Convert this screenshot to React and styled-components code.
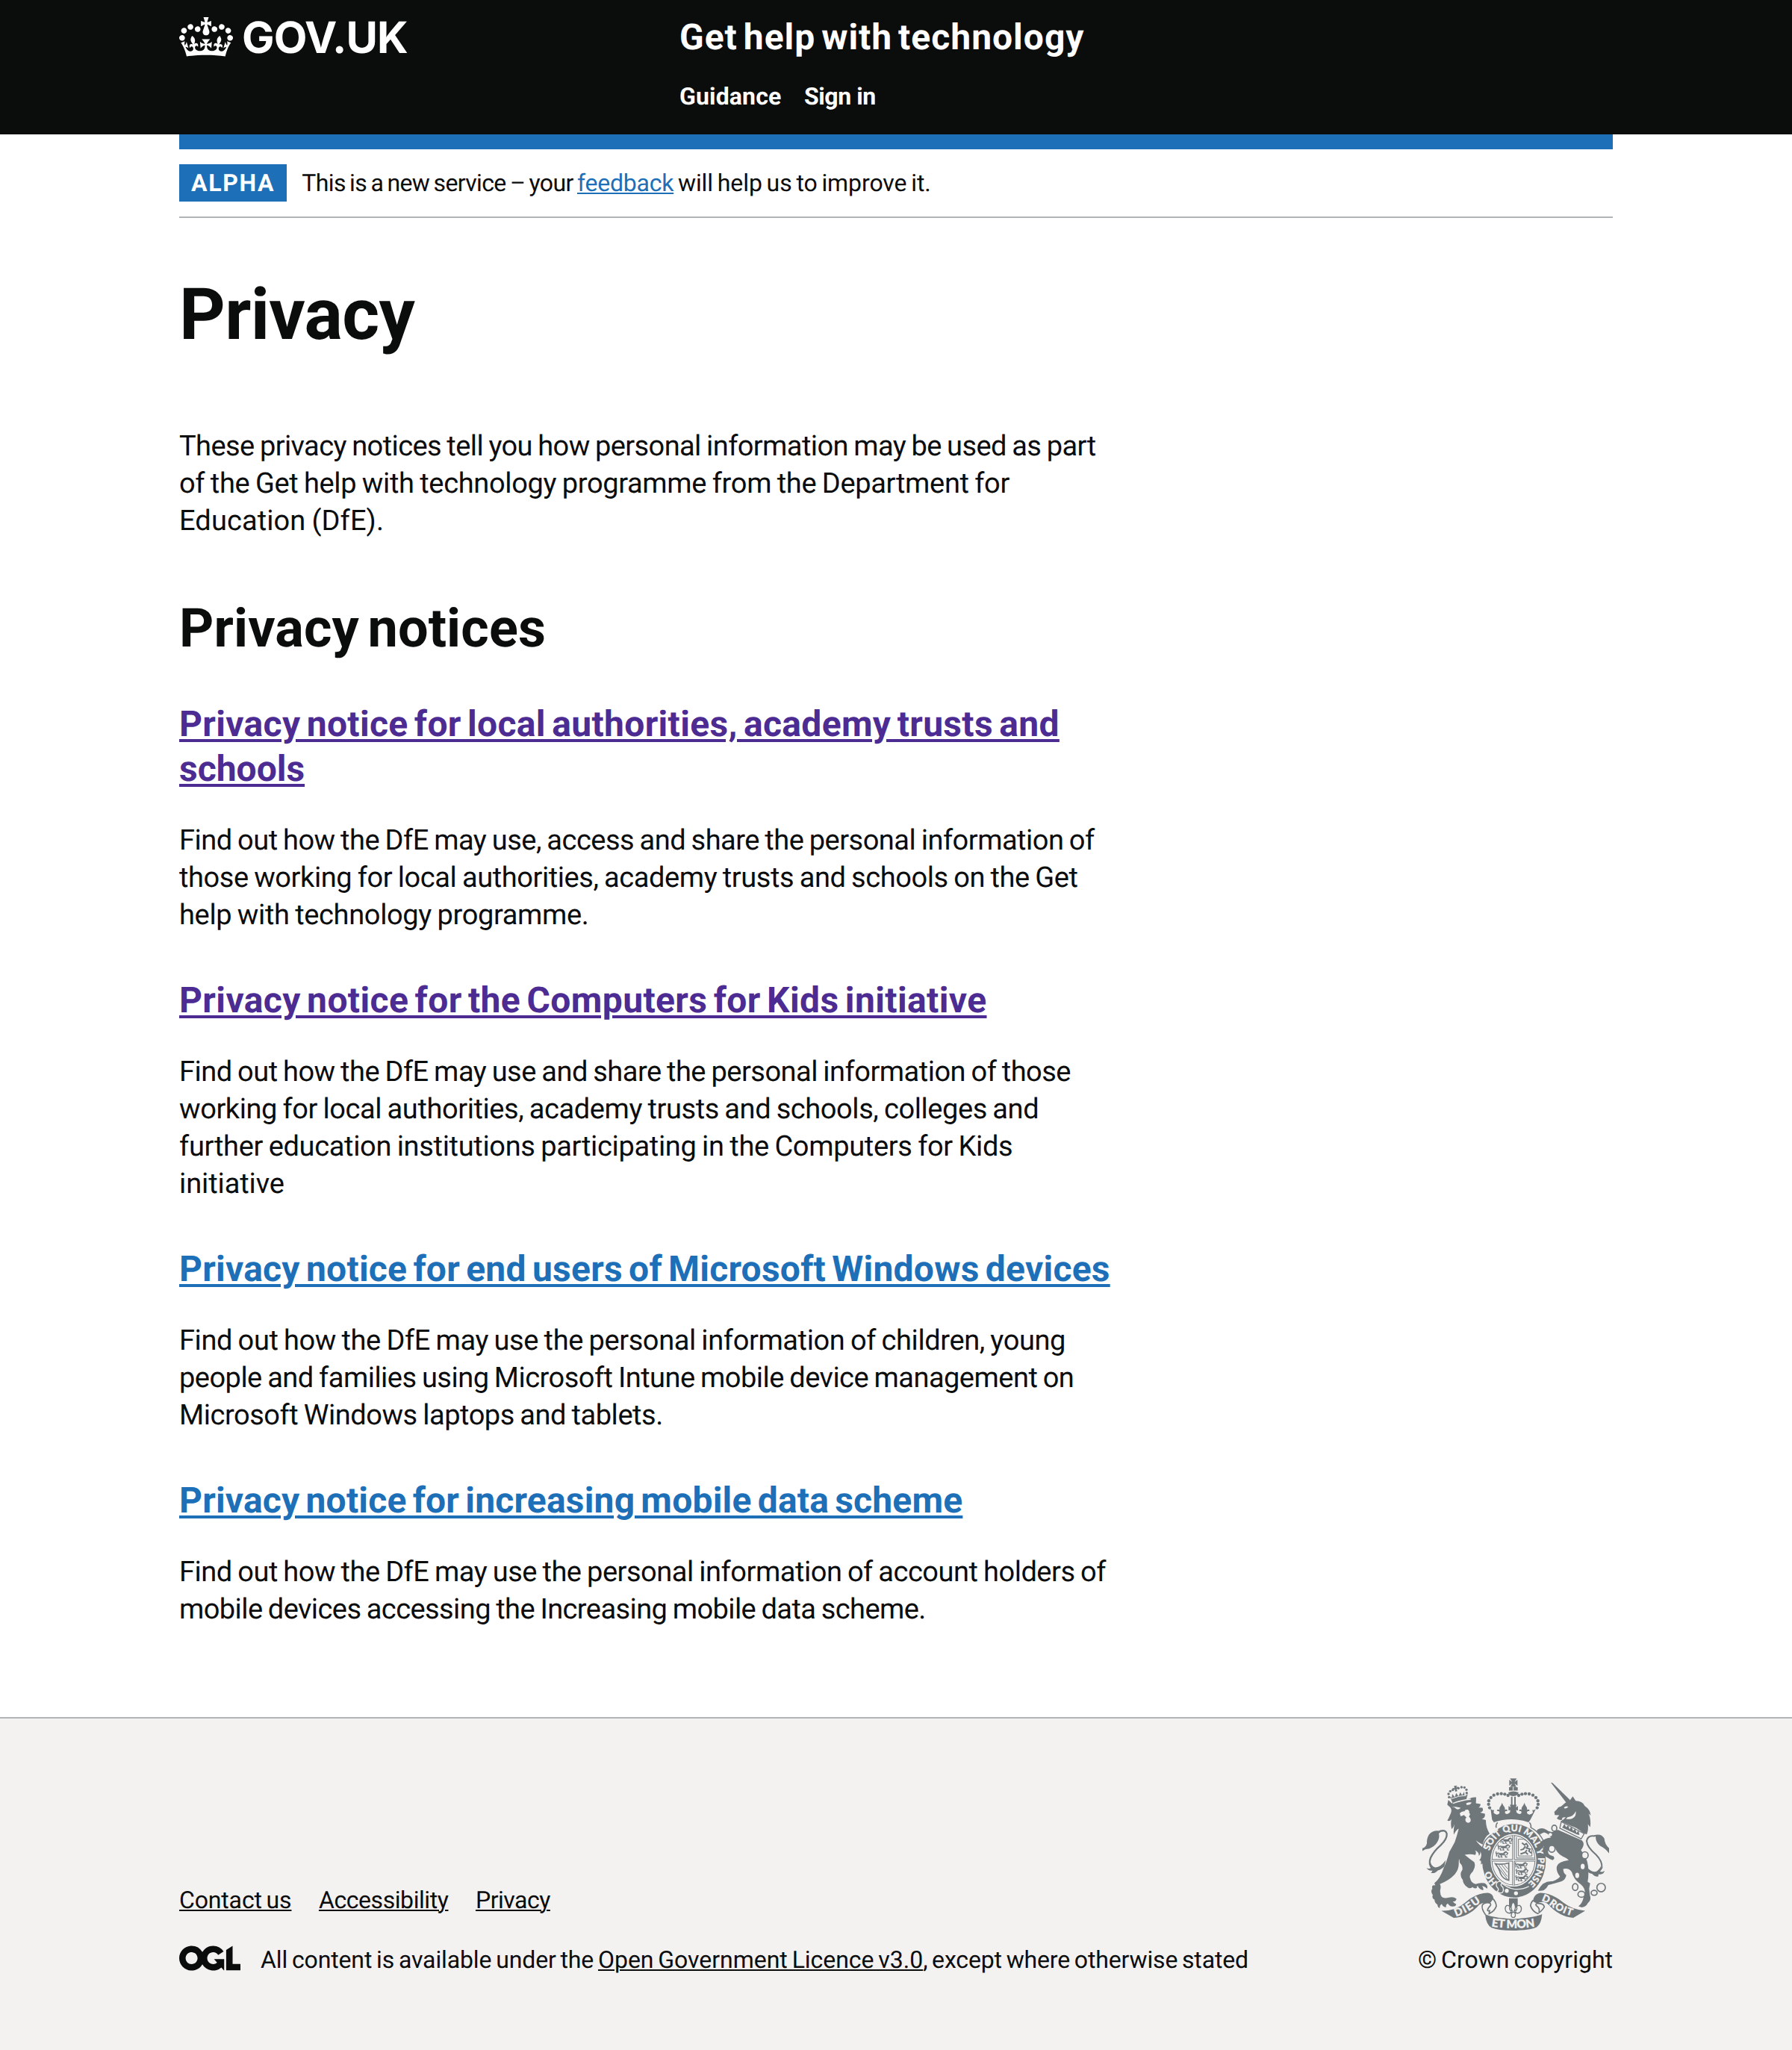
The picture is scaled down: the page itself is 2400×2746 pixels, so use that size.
import React from "react";
import styled, { createGlobalStyle, css } from "styled-components";

const ink = "#0b0c0c";
const blue = "#1d70b8";
const visited = "#4c2c92";
const rule = "#b1b4b6";
const paper = "#f3f2f1";
const crest = "#6f777b";

const GlobalStyle = createGlobalStyle`
  *, *::before, *::after { box-sizing: border-box; }
  html, body { margin: 0; padding: 0; }
  body {
    background: #fff;
    color: ${ink};
    font-family: Roboto, "Liberation Sans", sans-serif;
    text-rendering: geometricPrecision;
  }
  h1, h2, h3, p, ul { margin: 0; padding: 0; }
`;

const Container = styled.div`
  width: 1920px;
  margin: 0 auto;
`;

const linkBase = css`
  color: inherit;
  text-decoration: underline;
  text-decoration-skip-ink: auto;
`;

const TextLink = styled.a`
  ${linkBase}
  color: ${(p) => p.$color || "inherit"};
  text-decoration-thickness: 2px;
  text-underline-offset: 2px;
  letter-spacing: ${(p) => p.$track || 0}px;
  white-space: nowrap;
`;

const Run = styled.span`
  white-space: pre;
  letter-spacing: ${(p) => p.$track || 0}px;
`;

const Line = styled.span`
  display: block;
  white-space: nowrap;
  letter-spacing: ${(p) => p.$track || 0}px;
`;

/* Header */

const Header = styled.header`
  height: 180px;
  background: ${ink};
  color: #fff;
`;

const HeaderInner = styled(Container)`
  display: flex;
  padding-top: 20px;
`;

const Brand = styled.a`
  display: flex;
  width: 670px;
  gap: 12px;
  color: #fff;
  text-decoration: none;
`;

const CrownIcon = styled.svg`
  width: 72px;
  height: 53px;
  margin-top: 3px;
  fill: currentColor;
`;

const Logotype = styled.span`
  font: 700 58px/60px Inter, "Liberation Sans", sans-serif;
  letter-spacing: -0.9px;
`;

const HeaderContent = styled.div`
  display: flex;
  flex-direction: column;
  gap: 29px;
`;

const ServiceName = styled.a`
  font-size: 48px;
  line-height: 60px;
  font-weight: 700;
  letter-spacing: 0.99px;
  word-spacing: -5px;
  color: #fff;
`;

const Nav = styled.nav`
  display: flex;
  gap: 30.5px;
`;

const NavLink = styled.a`
  font-size: 32px;
  line-height: 40px;
  font-weight: 700;
  letter-spacing: ${(p) => p.$track}px;
  color: #fff;
`;

const BlueBar = styled.div`
  height: 20px;
  background: ${blue};
`;

/* Phase banner */

const PhaseBanner = styled.div`
  display: flex;
  align-items: center;
  gap: 20px;
  height: 92px;
  border-bottom: 2px solid ${rule};
`;

const Tag = styled.strong`
  height: 50px;
  padding: 0 16px;
  background: ${blue};
  color: #fff;
  font-size: 32px;
  line-height: 50px;
  letter-spacing: 1.7px;
`;

const SmallText = styled.span`
  font-size: 32px;
  line-height: 40px;
  word-spacing: -2px;
  white-space: nowrap;
`;

/* Main content */

const Main = styled.main`
  padding: 80px 0 60px;
`;

const PageTitle = styled.h1`
  font-size: 96px;
  line-height: 100px;
  letter-spacing: -0.7px;
  margin-bottom: 101px;
`;

const SectionTitle = styled.h2`
  font-size: 72px;
  line-height: 80px;
  letter-spacing: 0.12px;
  word-spacing: -6.5px;
  margin: 79px 0 58px;
`;

const NoticeTitle = styled.h3`
  font-size: 48px;
  line-height: 60px;
  word-spacing: -4px;
  margin-bottom: 41px;
`;

const NoticeLink = styled.a`
  ${linkBase}
  color: ${(p) => (p.$visited ? visited : blue)};
  text-decoration: none;

  ${Line} {
    width: max-content;
    text-decoration: underline;
    text-decoration-thickness: 4px;
    text-underline-offset: 4px;
  }
`;

const Body = styled.p`
  font-size: 38px;
  line-height: 50px;
  word-spacing: -1.5px;
`;

const Notice = styled.section`
  margin-bottom: 59px;
`;

/* Footer */

const Footer = styled.footer`
  height: 446px;
  background: ${paper};
  border-top: 2px solid ${rule};
`;

const FooterInner = styled(Container)`
  display: flex;
  justify-content: space-between;
  align-items: flex-end;
  padding-top: 80px;
`;

const FooterMeta = styled.div`
  display: flex;
  flex-direction: column;
  gap: 40px;
`;

const FooterLinks = styled.nav`
  display: flex;
  gap: 36.5px;
  font-size: 32px;
  line-height: 40px;
  word-spacing: -2px;
`;

const Licence = styled.div`
  display: flex;
  align-items: center;
  gap: 27px;
`;

const LicenceMark = styled.svg`
  width: 82px;
  height: 34px;
  margin-top: -4px;
`;

const Copyright = styled.div`
  display: flex;
  flex-direction: column;
  align-items: center;
  gap: 19px;
`;

const Arms = styled.svg`
  width: 250px;
  height: 204px;
`;

const notices = [
  {
    visited: true,
    title: [
      ["Privacy notice for local authorities, academy trusts and", 0.34],
      ["schools", 0],
    ],
    body: [
      ["Find out how the DfE may use, access and share the personal information of", -0.505],
      ["those working for local authorities, academy trusts and schools on the Get", -0.417],
      ["help with technology programme.", -0.35],
    ],
  },
  {
    visited: true,
    title: [["Privacy notice for the Computers for Kids initiative", 0.39]],
    body: [
      ["Find out how the DfE may use and share the personal information of those", -0.508],
      ["working for local authorities, academy trusts and schools, colleges and", -0.42],
      ["further education institutions participating in the Computers for Kids", -0.329],
      ["initiative", -0.1],
    ],
  },
  {
    title: [["Privacy notice for end users of Microsoft Windows devices", 0.245]],
    body: [
      ["Find out how the DfE may use the personal information of children, young", -0.394],
      ["people and families using Microsoft Intune mobile device management on", -0.525],
      ["Microsoft Windows laptops and tablets.", -0.46],
    ],
  },
  {
    title: [["Privacy notice for increasing mobile data scheme", 0.195]],
    body: [
      ["Find out how the DfE may use the personal information of account holders of", -0.468],
      ["mobile devices accessing the Increasing mobile data scheme.", -0.58],
    ],
  },
];

const intro = [
  ["These privacy notices tell you how personal information may be used as part", -0.593],
  ["of the Get help with technology programme from the Department for", -0.337],
  ["Education (DfE).", 0.1],
];

const Lines = ({ lines }) =>
  lines.map(([text, track]) => (
    <Line key={text} $track={track}>
      {text}
    </Line>
  ));

const Crown = () => (
  <CrownIcon viewBox="0 0 132 97" aria-hidden="true">
    <path d="M25 30.2c3.5 1.5 7.7-.2 9.1-3.7 1.5-3.6-.2-7.8-3.9-9.2-3.6-1.4-7.6.3-9.1 3.9-1.4 3.5.3 7.5 3.9 9zM9 39.5c3.6 1.5 7.8-.2 9.2-3.7 1.5-3.6-.2-7.8-3.9-9.1-3.6-1.5-7.6.2-9.1 3.8-1.4 3.5.3 7.5 3.8 9zM4.4 57.2c3.5 1.5 7.7-.2 9.1-3.8 1.5-3.6-.2-7.7-3.9-9.1-3.5-1.5-7.6.3-9.1 3.8-1.4 3.5.3 7.6 3.9 9.1zm38.3-21.4c3.5 1.5 7.7-.2 9.1-3.8 1.5-3.6-.2-7.7-3.9-9.1-3.6-1.5-7.6.3-9.1 3.8-1.3 3.6.4 7.7 3.9 9.1zm64.4-5.6c-3.6 1.5-7.8-.2-9.1-3.7-1.5-3.6.2-7.8 3.8-9.2 3.6-1.4 7.7.3 9.2 3.9 1.3 3.5-.4 7.5-3.9 9zm15.9 9.3c-3.6 1.5-7.7-.2-9.1-3.7-1.5-3.6.2-7.8 3.7-9.1 3.6-1.5 7.7.2 9.2 3.8 1.5 3.5-.3 7.5-3.8 9zm4.7 17.7c-3.6 1.5-7.8-.2-9.2-3.8-1.5-3.6.2-7.7 3.9-9.1 3.6-1.5 7.7.3 9.2 3.8 1.3 3.5-.4 7.6-3.9 9.1zM89.3 35.8c-3.6 1.5-7.8-.2-9.2-3.8-1.4-3.6.2-7.7 3.9-9.1 3.6-1.5 7.7.3 9.2 3.8 1.4 3.6-.3 7.7-3.9 9.1zM69.7 17.7l8.9 4.7V9.3l-8.9 2.8c-.2-.3-.5-.6-.9-.9L72.4 0H59.6l3.5 11.2c-.3.3-.6.5-.9.9l-8.8-2.8v13.1l8.8-4.7c.3.3.6.7.9.9l-5 15.4v.1c-.2.8-.4 1.6-.4 2.4 0 4.1 3.1 7.5 7 8.1h.2c.3 0 .7.1 1 .1.4 0 .7 0 1-.1h.2c4-.6 7.1-4.1 7.1-8.1 0-.8-.1-1.7-.4-2.4V34l-5.1-15.4c.4-.2.7-.6 1-.9zM66 92.8c16.9 0 32.8 1.1 47.1 3.2 4-16.9 8.9-26.7 14-33.5l-9.6-3.4c1 4.9 1.1 7.2 0 10.2-1.5-1.4-3-4.3-4.2-8.7L108.6 76c2.8-2 5-3.2 7.5-3.3-4.4 9.4-10 11.9-13.6 11.2-4.3-.8-6.3-4.6-5.6-7.9 1-4.7 5.7-5.9 8-.5 4.3-8.7-3-11.4-7.6-8.8 7.1-7.2 7.9-13.5 2.1-21.1-8 6.1-8.1 12.3-4.5 20.8-4.7-5.4-12.1-2.5-9.5 6.2 3.4-5.2 7.9-2 7.2 3.1-.6 4.3-6.4 7.8-13.5 7.2-10.3-.9-10.9-8-11.2-13.8 2.5-.5 7.1 1.8 11 7.3L80.2 60c-4.1 4.4-8 5.3-12.3 5.4 1.4-4.4 8-11.6 8-11.6H55.5s6.4 7.2 7.9 11.6c-4.2-.1-8-1-12.3-5.4l1.4 16.4c3.9-5.5 8.5-7.7 10.9-7.3-.3 5.8-.9 12.8-11.1 13.8-7.2.6-12.9-2.9-13.5-7.2-.7-5 3.8-8.3 7.1-3.1 2.7-8.7-4.6-11.6-9.4-6.2 3.7-8.5 3.6-14.7-4.6-20.8-5.8 7.6-5 13.9 2.2 21.1-4.7-2.6-11.9.1-7.7 8.8 2.3-5.5 7.1-4.2 8.1.5.7 3.3-1.3 7.1-5.7 7.9-3.5.7-9-1.8-13.5-11.2 2.5.1 4.7 1.3 7.5 3.3l-4.7-15.4c-1.2 4.4-2.7 7.2-4.3 8.7-1.1-3-.9-5.3 0-10.2l-9.5 3.4c5 6.9 9.9 16.7 14 33.5 14.8-2.1 30.8-3.2 47.7-3.2z" />
  </CrownIcon>
);

const OpenLicenceMark = () => (
  <LicenceMark viewBox="0 0 483.2 195.7" fill={ink} aria-hidden="true">
    <path d="M421.5 142.8V.1l-50.7 32.3v161.1h112.4v-50.7zm-122.3-9.6A47.12 47.12 0 0 1 221 97.8c0-26 21.1-47.1 47.1-47.1 16.7 0 31.4 8.7 39.7 21.8l42.7-27.2A97.63 97.63 0 0 0 268.1 0c-36.5 0-68.3 20.1-85.1 49.7A98 98 0 0 0 97.8 0C43.9 0 0 43.9 0 97.8s43.9 97.8 97.8 97.8c36.5 0 68.3-20.1 85.1-49.7a97.76 97.76 0 0 0 149.6 25.4l19.4 22.2h3v-87.8h-80l24.3 27.5zM97.8 145c-26 0-47.1-21.1-47.1-47.1s21.1-47.1 47.1-47.1 47.1 21.1 47.1 47.1S123.8 145 97.8 145" />
  </LicenceMark>
);

const crownPearls = [
  [342, 184], [338, 170], [339, 156], [347, 143], [359, 133], [374, 128], [389, 127], [403, 129], [416, 134],
];
const smallPearls = [
  [179, 141], [177, 128], [184, 117], [194, 112], [217, 105], [229, 101], [241, 102], [249, 111], [250, 124],
];

const WalkingLion = ({ x, y }) => (
  <g transform={`translate(${x} ${y})`} strokeWidth="4" fill="none">
    <path d="M2 18V8q6-6 12-2h18l8-6 7 4-5 9M8 10l2 10h6M22 8l-2 12h6M36 9l2 11h7" />
    <path d="M12 10h22" strokeWidth="6" />
    <path d="M4 8q-8-4-2-10M30 6q4-8 12-8" />
  </g>
);

const RoyalArms = () => (
  <Arms viewBox="72 65 750 613" preserveAspectRatio="none" fill={crest} stroke="none" aria-hidden="true">
    <defs>
      <path id="motto" d="M376 486A100 116 0 1 1 490 492" />
      <path id="dieu" d="M207 622Q255 606 292 574Q306 564 322 562" />
      <path id="droit" d="M549 559Q566 562 583 575Q622 606 684 622" />
      <path id="etmon" d="M349 661Q437 676 528 661" />
      <clipPath id="shieldClip">
        <ellipse cx="438" cy="395" rx="88" ry="101" />
      </clipPath>
    </defs>

    {/* Lion's crown */}
    <g>
      {smallPearls.map(([x, y]) => (
        <circle key={`${x}-${y}`} cx={x} cy={y} r="5" />
      ))}
      <path d="M199 96l12-2-3 8 8-3 2 9-8-1 2 10-8 2-2-10-7 4-2-9 8 1z" />
      <path d="M181 137l9 7 2-16 10 13 6-17 9 14 7-17 8 12 8-14 1 15 13-5-6 24q-30 1-53 14z" />
      <path d="M187 148q30-13 62-14" fill="none" stroke={paper} strokeWidth="3" />
    </g>

    {/* Lion */}
    <path d="M112 430Q95 410 105 385Q118 358 145 335Q172 310 170 288Q165 270 140 279" fill="none" stroke={crest} strokeWidth="7" />
    <path d="M148 279Q118 270 99 291Q89 307 90 327Q86 343 72 347V358Q84 348 98 349Q118 342 130 325Q143 305 138 287z" />
    <path d="M88 425Q97 432 108 425Q101 410 104 401Q108 420 124 424Q145 424 166 394L160 420Q143 435 134 436Q122 450 106 446Q113 440 112 436Q97 440 88 425z" />
    <path d="M176 152L172 172L184 182Q194 194 182 215Q177 228 172 235Q181 240 189 230Q184 250 190 270Q197 264 201 250Q196 275 198 292Q208 272 218 268Q210 300 202 322Q190 345 180 362Q170 400 158 425Q142 472 120 487L124 496Q107 492 112 510Q103 520 114 535Q108 548 121 554Q120 566 133 574Q132 584 142 588Q141 574 150 571Q155 584 168 584Q164 574 174 569Q184 585 198 580Q205 582 208 572Q199 568 194 561Q207 562 209 550Q197 540 178 545Q160 550 150 543Q140 528 145 508Q147 497 142 491Q180 476 202 452Q220 430 218 405Q219 375 222 405Q234 415 233 432Q218 453 234 474Q236 493 251 502Q263 513 273 503Q282 512 292 506Q287 500 295 499Q300 512 316 516Q319 506 311 499Q324 500 332 510Q337 496 322 487Q300 484 286 491Q268 488 264 468Q258 456 275 440Q288 418 280 402Q262 390 242 373Q266 368 284 374Q291 364 283 355Q300 362 299 378Q307 370 304 358Q315 380 300 396Q312 394 306 412Q315 406 320 410L320 422Q334 412 330 424L342 412Q349 400 345 388Q343 362 322 348Q300 335 287 315Q301 326 314 332Q322 300 342 288Q326 262 327 233L311 229Q326 224 323 208L304 203Q320 198 313 184L298 183Q307 176 305 169L287 166L288 142Q270 140 262 147Q225 160 190 166z" />
    <path d="M190 180q12 0 18 8 10 6 18-4l-20-4zM248 166q11-6 22-3-7 12-21 9zM222 206q8-10 20-8 0-8 12-7 8 3 6 14l4 4-5 11q10 9 6 19-8 10-18 1-6-10 2-17l-10-10-13 5z" fill={paper} />
    <path d="M195 166Q230 152 266 150" fill="none" stroke={paper} strokeWidth="4" />

    {/* Central crown */}
    <path d="M424 66h27l-9 14 12-9v24l-12-9 8 14h-26l9-14-12 9V71l12 9z" />
    <path d="M420 101h35v14h-35z" />
    <path d="M437 99v18M420 117h36" stroke={paper} strokeWidth="3" />
    <path d="M417 122q20-9 41 0-1 14-21 15-19-1-20-15z" />
    <path d="M428 139h6v36h-6zM441 139h6v36h-6z" />
    {crownPearls.map(([x, y]) => (
      <React.Fragment key={`${x}-${y}`}>
        <circle cx={x} cy={y} r="6.5" />
        <circle cx={875 - x} cy={y} r="6.5" />
      </React.Fragment>
    ))}
    <path d="M346 188q8 8 14 4l-2 12q12 12 22 4 4-6-1-11-5 2-8-3 5-7 11-1-2-8 2-13 5-6 8-16 4 10 9 16 4 6 2 13 6-6 11 1-3 5-8 3-5 6 1 11 8 4 17-6l1-9-7 2v-18l9 5-4-10h28l-4 10 9-5v18l-7-2 1 9q9 10 17 6 6-5 1-11-5 2-8-3 5-7 11-1-2-7 2-13 5-6 9-16 3 10 8 16 4 5 2 13 6-6 11 1-3 5-8 3-5 5-1 11 10 8 22-4l-2-12q6 4 14-4l-22 44q-4 6-7 10-70-24-140 0-3-4-7-10z" />
    <path d="M374 243q-9 10-5 21M502 243q9 10 5 21" fill="none" stroke={crest} strokeWidth="5" />

    {/* Garter and shield */}
    <ellipse cx="440" cy="397" rx="128" ry="148" />
    <path d="M313 350Q317 307 365 284M507 263Q560 290 575 370" fill="none" stroke={crest} strokeWidth="4" />
    <ellipse cx="438" cy="395" rx="92" ry="106" fill={paper} />
    <g clipPath="url(#shieldClip)" stroke={crest}>
      <ellipse cx="438" cy="395" rx="87" ry="100" fill="none" strokeWidth="4" />
      <path d="M438 290v210M345 395h190" strokeWidth="10" />
      <path d="M438 290v210M345 395h190" stroke={paper} strokeWidth="4" />
      <WalkingLion x={386} y={307} />
      <WalkingLion x={376} y={334} />
      <WalkingLion x={368} y={362} />
      <WalkingLion x={446} y={406} />
      <WalkingLion x={449} y={432} />
      <WalkingLion x={448} y={458} />
      <path d="M450 302v84h70M458 310v68h54V340q-10-20-34-30z" fill="none" strokeWidth="3" />
      <path d="M472 325l10 8 8-5 6 10-6 8 14 4-4 8 10 8M486 338l-8 12-12 4M492 354l-8 10-18 6M488 364l8 8" fill="none" strokeWidth="6" />
      <path d="M365 409q28 5 54-3v70q-24-5-33-27-4-18-21-40z" fill="none" strokeWidth="5" />
      <path d="M379 414l34 46M390 413l24 31M401 413l14 17M377 424l37 48" fill="none" strokeWidth="3" />
    </g>
    <path d="M380 478Q410 506 440 511Q475 514 500 500" fill="none" stroke={paper} strokeWidth="4" />
    <path d="M372 484q14-10 20 4-10 6 2 14 8 14-2 24-14 4-20-6 8-4 4-12-12-10-4-24z" stroke={paper} strokeWidth="4" />
    <circle cx="411" cy="518" r="8" fill={paper} />
    <circle cx="448" cy="528" r="8" fill={paper} />
    <g fill={paper} stroke={paper} strokeWidth="1" fontFamily="Lato, sans-serif" fontWeight="900" fontSize="36">
      <text letterSpacing="-1">
        <textPath href="#motto" startOffset="4">HO</textPath>
      </text>
      <text>
        <textPath href="#motto" startOffset="140" textLength="408">SOIT QUI MAL Y PENSE</textPath>
      </text>
    </g>

    {/* Unicorn */}
    <path d="M588 82l7 2 70 68-12 15z" />
    <path d="M630 178Q645 162 666 152L676 138L688 156Q715 156 724 176Q748 192 748 215L740 207Q751 235 746 262L737 250Q740 275 732 291L716 284Q690 262 672 258L640 244L628 238Q640 232 648 222Q630 220 634 232Q620 236 612 226L622 214L604 213L602 200Q612 192 618 182z" />
    <path d="M641 182q9-8 17-2-5 8-16 6zM655 222q26-4 33-25 4 22-14 30-12 4-25 2z" fill={paper} />
    <path d="M630 240L722 288L710 309L624 266z" fill={paper} stroke={crest} strokeWidth="4" />
    <path d="M635 262l8-14 6 14 9-8 5 17 8-12 6 18 9-9 5 17 8-10 4 18-10-2-60-28z" />
    <path d="M616 272L713 315Q728 330 709 354Q735 385 738 420Q741 455 736 482L746 488L742 510L745 536Q752 556 736 568Q732 580 712 585L699 580Q714 568 718 550L725 520Q722 500 700 486Q680 470 672 442Q660 425 638 430Q637 445 650 455Q648 472 632 480Q606 488 578 495Q572 508 560 516Q548 520 536 517Q545 500 556 490Q575 478 595 480Q620 470 625 460Q608 440 612 420Q618 400 660 395Q650 385 636 380Q610 365 605 342L582 348Q570 362 584 374L600 380L602 388L596 395Q572 385 562 375Q552 355 560 340Q545 335 546 322Q566 305 588 304Q576 285 560 283L545 290Q528 288 533 272Q552 260 570 272Q590 290 616 272z" />
    <path d="M745 440Q778 455 793 425Q796 400 770 373Q734 343 732 318Q736 293 765 298" fill="none" stroke={crest} strokeWidth="6" />
    <path d="M760 295Q790 284 803 308Q804 330 822 347V367Q808 348 786 337Q768 322 768 300z" />
    <path d="M734 425Q760 450 774 438Q790 425 790 412Q792 426 784 438Q794 446 804 437Q800 455 780 451L778 461Q763 462 754 450Q740 448 734 436z" />
    <g fill={paper} stroke={crest} strokeWidth="5">
      <ellipse cx="602" cy="266" rx="10" ry="12" />
      <ellipse cx="592" cy="349" rx="13" ry="14" />
      <ellipse cx="725" cy="375" rx="13" ry="14" />
      <ellipse cx="686" cy="503" rx="11" ry="14" />
      <ellipse cx="711" cy="532" rx="14" ry="12" />
      <ellipse cx="762" cy="526" rx="12" ry="10" />
      <circle cx="790" cy="505" r="17" />
    </g>
    <circle cx="586" cy="292" r="7" fill={paper} />
    <ellipse cx="716" cy="420" rx="8" ry="11" fill={paper} />
    <ellipse cx="694" cy="456" rx="8" ry="11" fill={paper} />

    {/* Ribbon */}
    <path d="M148 598Q205 600 243 566Q290 525 335 526Q358 530 357 550L343 569Q318 561 300 574Q260 622 198 627z" />
    <path d="M726 598Q675 594 639 566Q590 525 545 526Q519 532 516 560L532 569Q560 555 579 574Q620 620 678 627z" />
    <g fill="none" stroke={crest} strokeWidth="5">
      <path d="M350 545Q368 560 369 580Q362 600 340 610L342 598Q325 602 343 580Q350 573 343 567Q322 562 313 575Q308 590 326 615" />
      <path d="M517 556Q505 570 507 580Q514 600 535 610Q550 602 562 583Q560 568 532 569Q522 573 535 582Q545 592 540 603" />
    </g>
    <path d="M324 612Q345 625 437 632Q528 625 553 612Q550 650 532 664Q510 677 437 678Q375 678 350 667Q328 655 324 612z" />
    <path d="M420 548h35v38h-35z" />
    <g fill={paper} stroke={crest} strokeWidth="4">
      <path d="M437 562Q422 580 433 599Q424 600 422 590Q426 575 411 577Q400 585 408 601Q416 612 432 606Q424 624 437 626Q450 624 443 606Q460 612 467 601Q474 585 463 577Q448 575 452 590Q450 600 441 599Q452 580 437 562z" />
      <path d="M424 604h26" strokeWidth="5" />
    </g>
    <g fill={paper} stroke={paper} strokeWidth="1" fontFamily="Lato, sans-serif" fontWeight="900">
      <text fontSize="43"><textPath href="#dieu" textLength="116">DIEU</textPath></text>
      <text fontSize="40"><textPath href="#droit" textLength="137">DROIT</textPath></text>
      <text fontSize="46"><textPath href="#etmon" textLength="176">ET MON</textPath></text>
    </g>
  </Arms>
);

export default function App() {
  return (
    <>
      <GlobalStyle />
      <Header>
        <HeaderInner>
          <Brand>
            <Crown />
            <Logotype>GOV.UK</Logotype>
          </Brand>
          <HeaderContent>
            <ServiceName>Get help with technology</ServiceName>
            <Nav>
              <NavLink $track={0.15}>Guidance</NavLink>
              <NavLink $track={-0.4}>Sign in</NavLink>
            </Nav>
          </HeaderContent>
        </HeaderInner>
      </Header>

      <Container>
        <BlueBar />
        <PhaseBanner>
          <Tag>ALPHA</Tag>
          <SmallText>
            <Run $track={-0.64}>{"This is a new service – your "}</Run>
            <TextLink $color={blue} $track={-0.24}>feedback</TextLink>
            <Run $track={-0.1}>{" will help us to improve it."}</Run>
          </SmallText>
        </PhaseBanner>

        <Main>
          <PageTitle>Privacy</PageTitle>
          <Body>
            <Lines lines={intro} />
          </Body>
          <SectionTitle>Privacy notices</SectionTitle>
          {notices.map((n) => (
            <Notice key={n.title[0][0]}>
              <NoticeTitle>
                <NoticeLink $visited={n.visited}>
                  <Lines lines={n.title} />
                </NoticeLink>
              </NoticeTitle>
              <Body>
                <Lines lines={n.body} />
              </Body>
            </Notice>
          ))}
        </Main>
      </Container>

      <Footer>
        <FooterInner>
          <FooterMeta>
            <FooterLinks>
              <TextLink $track={-0.15}>Contact us</TextLink>
              <TextLink $track={-0.43}>Accessibility</TextLink>
              <TextLink $track={-0.49}>Privacy</TextLink>
            </FooterLinks>
            <Licence>
              <OpenLicenceMark />
              <SmallText>
                <Run $track={-0.125}>{"All content is available under the "}</Run>
                <TextLink $track={-0.04}>Open Government Licence v3.0</TextLink>
                <Run $track={-0.15}>, except where otherwise stated</Run>
              </SmallText>
            </Licence>
          </FooterMeta>
          <Copyright>
            <RoyalArms />
            <SmallText>© Crown copyright</SmallText>
          </Copyright>
        </FooterInner>
      </Footer>
    </>
  );
}
